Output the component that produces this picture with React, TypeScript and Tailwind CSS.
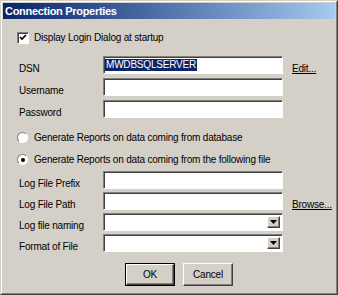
import React from 'react';

const sunken =
  'border border-t-[#808080] border-l-[#808080] border-b-white border-r-white shadow-[inset_1px_1px_0_#404040]';
const raised =
  'border border-t-white border-l-white border-b-[#404040] border-r-[#404040] shadow-[inset_-1px_-1px_0_#808080]';

const Field = ({ label, value, link }: { label: string; value?: string; link?: string }) => (
  <div className="flex h-[18px] items-center">
    <span className="w-[100px] shrink-0 whitespace-nowrap pt-[6px] pl-[16px]">{label}</span>
    <div className={`h-[18px] w-[180px] bg-white ${sunken} flex items-center pl-[1px]`}>
      {value && <span className="bg-[#0a246a] text-white leading-[12px] px-px">{value}</span>}
    </div>
    {link && <span className="ml-[9px] pt-[6px] underline text-black">{link}</span>}
  </div>
);

const Combo = ({ label }: { label: string }) => (
  <div className="flex h-[18px] items-center">
    <span className="w-[100px] shrink-0 whitespace-nowrap pt-[6px] pl-[16px]">{label}</span>
    <div className={`h-[18px] w-[180px] bg-white ${sunken} flex justify-end items-stretch p-[2px]`}>
      <div className={`w-[13px] bg-[#d4d0c8] ${raised} flex items-center justify-center`}>
        <svg width="7" height="4" viewBox="0 0 7 4">
          <path d="M0 0h7L3.5 4z" fill="#000" />
        </svg>
      </div>
    </div>
  </div>
);

const Radio = ({ checked, label }: { checked?: boolean; label: string }) => (
  <div className="flex items-center h-[13px] pl-[14px]">
    <div className="w-[11px] h-[11px] rounded-full bg-white border border-t-[#808080] border-l-[#808080] border-b-white border-r-white flex items-center justify-center">
      {checked && <div className="w-[4px] h-[4px] rounded-full bg-black" />}
    </div>
    <span className="ml-[6px]">{label}</span>
  </div>
);

export default function App() {
  return (
    <div
      className="w-[338px] h-[295px] bg-[#d4d0c8] border border-t-[#d4d0c8] border-l-[#d4d0c8] border-r-[#404040] border-b-[#404040] text-[10px] tracking-[-0.2px] text-black"
      style={{ fontFamily: '"Liberation Sans", Arial, sans-serif' }}
    >
      <div className="h-full border border-t-white border-l-white border-r-[#808080] border-b-[#808080] p-px flex flex-col">
        <div className="h-[16px] shrink-0 bg-gradient-to-r from-[#0a246a] to-[#a6caf0] flex items-center pl-[2px]">
          <span className="font-bold text-white text-[11px] tracking-[-0.3px]">Connection Properties</span>
        </div>

        <div className="flex items-center h-[13px] pl-[14px] mt-[12px]">
          <div className={`w-[12px] h-[12px] bg-white ${sunken} flex items-center justify-center`}>
            <svg width="8" height="7" viewBox="0 0 8 7">
              <path d="M1 3l2 2 4-4" stroke="#000" strokeWidth="1.6" fill="none" />
            </svg>
          </div>
          <span className="ml-[5px]">Display Login Dialog at startup</span>
        </div>

        <div className="flex flex-col gap-[4px] mt-[12px]">
          <Field label="DSN" value="MWDBSQLSERVER" link="Edit..." />
          <Field label="Username" />
          <Field label="Password" />
        </div>

        <div className="flex flex-col gap-[9px] mt-[13px]">
          <Radio label="Generate Reports on data coming from database" />
          <Radio checked label="Generate Reports on data coming from the following file" />
        </div>

        <div className="flex flex-col gap-[3px] mt-[5px]">
          <Field label="Log File Prefix" />
          <Field label="Log File Path" link="Browse..." />
          <Combo label="Log file naming" />
          <Combo label="Format of File" />
        </div>

        <div className="flex justify-center gap-[8px] mt-[11px] pl-[20px]">
          <button className="w-[50px] h-[23px] border border-black">
            <div className={`h-full ${raised} flex items-center justify-center`}>OK</div>
          </button>
          <button className={`w-[50px] h-[23px] ${raised} flex items-center justify-center`}>Cancel</button>
        </div>
      </div>
    </div>
  );
}
